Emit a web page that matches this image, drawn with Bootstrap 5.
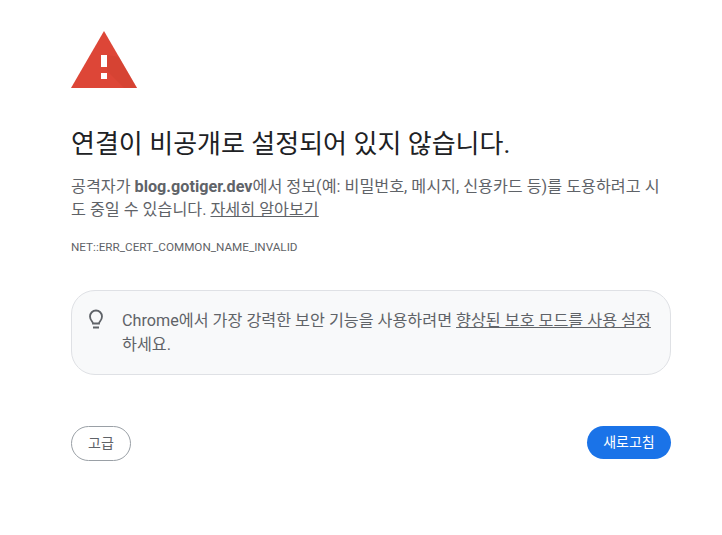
<!DOCTYPE html>
<html lang="ko">
<head>
  <meta charset="UTF-8" />
  <meta name="viewport" content="width=device-width, initial-scale=1.0" />
  <title>개인정보 보호 오류</title>
  <link href="https://cdn.jsdelivr.net/npm/bootstrap@5.3.3/dist/css/bootstrap.min.css" rel="stylesheet">
  <style>
    body {
      font-family: Roboto, "Noto Sans CJK KR", sans-serif;
      color: #5f6368;
      font-size: 14px;
      background: #fff;
    }
    .page-wrap {
      width: 600px;
      margin-left: 71px;
      padding-top: 31px;
    }
    .warn-icon {
      display: block;
      width: 66px;
      height: 57px;
    }
    .err-title {
      color: #202124;
      font-size: 26px;
      font-weight: 400;
      line-height: 32px;
      margin: 40px 0 0;
      font-family: Roboto, "Noto Sans CJK KR", sans-serif;
    }
    .err-text {
      font-size: 16.2px;
      line-height: 23px;
      margin: 15px 0 0;
    }
    .err-text a, .tip-text a {
      color: #5f6368;
    }
    .err-code {
      font-size: 11.7px;
      line-height: 16px;
      margin: 18px 0 0;
    }
    .tip-box {
      margin-top: 35px;
      height: 85px;
      border: 1px solid #dfe1e5;
      border-radius: 24px;
      background: #f8f9fa;
      padding: 18px 16px;
    }
    .tip-icon {
      width: 16px;
      height: 22px;
      flex: none;
      margin-right: 18px;
    }
    .tip-text {
      font-size: 16.2px;
      line-height: 24px;
    }
    .btn-row {
      margin-top: 51px;
    }
    .btn-adv {
      width: 60px;
      height: 35px;
      padding: 0;
      font-size: 14px;
      color: #5f6368;
      border: 1px solid #9aa0a6;
      border-radius: 18px;
      background: #fff;
    }
    .btn-reload {
      width: 84px;
      height: 33px;
      padding: 0;
      font-size: 14px;
      color: #fff;
      background: #1a73e8;
      border: 0;
      border-radius: 17px;
    }
  </style>
</head>
<body>
  <div class="page-wrap">
    <!-- 경고 아이콘 -->
    <svg class="warn-icon" viewBox="0 0 66 57" aria-hidden="true">
      <path d="M33 0 L66 57 H0 Z" fill="#dd4637"/>
      <path d="M36 24 V40 L53 57 H66 L48 26 Z" fill="#c8402f" opacity="0.35"/>
      <rect x="30" y="24" width="6" height="12" fill="#fff"/>
      <rect x="30" y="42" width="6" height="6" fill="#fff"/>
    </svg>

    <h1 class="err-title">연결이 비공개로 설정되어 있지 않습니다.</h1>
    <p class="err-text">공격자가 <strong>blog.gotiger.dev</strong>에서 정보(예: 비밀번호, 메시지, 신용카드 등)를 도용하려고 시도 중일 수 있습니다. <a href="#">자세히 알아보기</a></p>
    <p class="err-code">NET::ERR_CERT_COMMON_NAME_INVALID</p>

    <div class="tip-box d-flex">
      <svg class="tip-icon" viewBox="0 0 16 22" fill="none" stroke="#5f6368" stroke-width="1.8" aria-hidden="true">
        <path d="M5 14.5 C5 12.5 2 11.5 2 7.5 A6 6 0 0 1 14 7.5 C14 11.5 11 12.5 11 14.5 Z"/>
        <path d="M5 18.5 H11" stroke-width="2"/>
      </svg>
      <div class="tip-text">Chrome에서 가장 강력한 보안 기능을 사용하려면 <a href="#">향상된 보호 모드를 사용 설정</a>하세요.</div>
    </div>

    <div class="btn-row d-flex justify-content-between align-items-start">
      <button type="button" class="btn btn-adv">고급</button>
      <button type="button" class="btn btn-reload">새로고침</button>
    </div>
  </div>
  <script src="https://cdn.jsdelivr.net/npm/bootstrap@5.3.3/dist/js/bootstrap.bundle.min.js"></script>
</body>
</html>
